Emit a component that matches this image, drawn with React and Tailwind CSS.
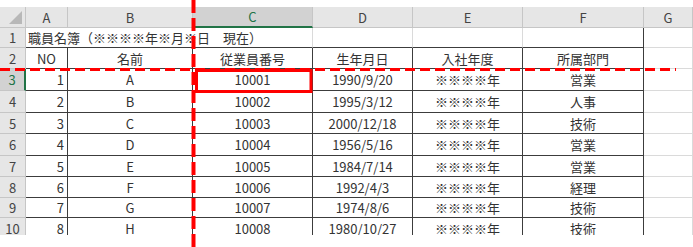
const rows = [
  ['1', 'A', '10001', '1990/9/20', '※※※※年', '営業'],
  ['2', 'B', '10002', '1995/3/12', '※※※※年', '人事'],
  ['3', 'C', '10003', '2000/12/18', '※※※※年', '技術'],
  ['4', 'D', '10004', '1956/5/16', '※※※※年', '営業'],
  ['5', 'E', '10005', '1984/7/14', '※※※※年', '営業'],
  ['6', 'F', '10006', '1992/4/3', '※※※※年', '経理'],
  ['7', 'G', '10007', '1974/8/6', '※※※※年', '技術'],
  ['8', 'H', '10008', '1980/10/27', '※※※※年', '技術'],
]

const colHead = 'bg-[#e6e6e6] border-r border-b border-[#c6c6c6] text-[#444] flex items-center justify-center'
const colHeadSel = 'bg-[#d2d2d2] border-r border-r-[#c6c6c6] border-b-2 border-b-[#217346] text-[#217346] flex items-center justify-center'
const rowHead = 'bg-[#e6e6e6] border-r border-b border-[#c6c6c6] text-[#444] flex items-center justify-center'
const rowHeadSel = 'bg-[#d2d2d2] border-r-2 border-r-[#217346] border-b border-b-[#c6c6c6] text-[#217346] flex items-center justify-center'
const dark = 'border-r border-b border-[#3c3c3c] flex items-center justify-center'
const light = 'border-r border-b border-[#dadada]'

function Lines() {
  return (
    <svg className="absolute left-0 top-0 pointer-events-none" width="693" height="247">
      {/* frozen pane markers */}
      <line x1="0" y1="69.5" x2="676" y2="69.5" stroke="#ff0000" strokeWidth="3" strokeDasharray="10 5" />
      <line x1="193.5" y1="0" x2="193.5" y2="247" stroke="#ff0000" strokeWidth="4" strokeDasharray="13 5" />
      {/* highlight on C3 */}
      <rect x="196.5" y="70.5" width="114.5" height="21" fill="none" stroke="#ff0000" strokeWidth="3" />
    </svg>
  )
}

export default function App() {
  return (
    <div className="relative w-[693px] h-[247px] bg-white overflow-hidden font-['Noto_Sans_CJK_JP',sans-serif] text-[13px] leading-none text-[#333]">
      <div className="pt-[7px] h-[235px] overflow-hidden">
        <div className="grid grid-cols-[26px_42px_125px_120px_100px_110px_121px_49px] grid-rows-[21px_20px_21px_22px_22px_21px_22px_21px_21px_20px_21px]">
          {/* column headers */}
          <div className="bg-[#e6e6e6] border-r border-b border-[#c6c6c6] relative">
            <svg className="absolute right-[3px] bottom-[3px]" width="13" height="13">
              <polygon points="13,0 13,13 0,13" fill="#b8b8b8" />
            </svg>
          </div>
          <div className={colHead}>A</div>
          <div className={colHead}>B</div>
          <div className={colHeadSel}>C</div>
          <div className={colHead}>D</div>
          <div className={colHead}>E</div>
          <div className={colHead}>F</div>
          <div className={colHead}>G</div>

          {/* row 1: title overflowing across A-C */}
          <div className={rowHead}>1</div>
          <div className="col-span-3 border-r border-r-[#dadada] border-b border-b-[#3c3c3c] flex items-center pl-[2px] whitespace-nowrap">
            職員名簿（※※※※年※月※日　現在）
          </div>
          <div className="border-r border-r-[#dadada] border-b border-b-[#3c3c3c]" />
          <div className="border-r border-r-[#dadada] border-b border-b-[#3c3c3c]" />
          <div className="border-r border-r-[#3c3c3c] border-b border-b-[#3c3c3c]" />
          <div className={light} />

          {/* row 2: table header */}
          <div className={rowHead}>2</div>
          <div className={dark}>NO</div>
          <div className={dark}>名前</div>
          <div className={dark}>従業員番号</div>
          <div className={dark}>生年月日</div>
          <div className={dark}>入社年度</div>
          <div className={dark}>所属部門</div>
          <div className={light} />

          {rows.map((r, i) => (
            <div key={r[0]} className="contents">
              <div className={i === 0 ? rowHeadSel : rowHead}>{i + 3}</div>
              <div className="border-r border-b border-[#3c3c3c] flex items-center justify-end pr-[3px]">{r[0]}</div>
              <div className={dark}>{r[1]}</div>
              <div className={dark}>{r[2]}</div>
              <div className={dark}>{r[3]}</div>
              <div className={dark}>{r[4]}</div>
              <div className={dark}>{r[5]}</div>
              <div className={light} />
            </div>
          ))}
        </div>
      </div>
      <Lines />
    </div>
  )
}
